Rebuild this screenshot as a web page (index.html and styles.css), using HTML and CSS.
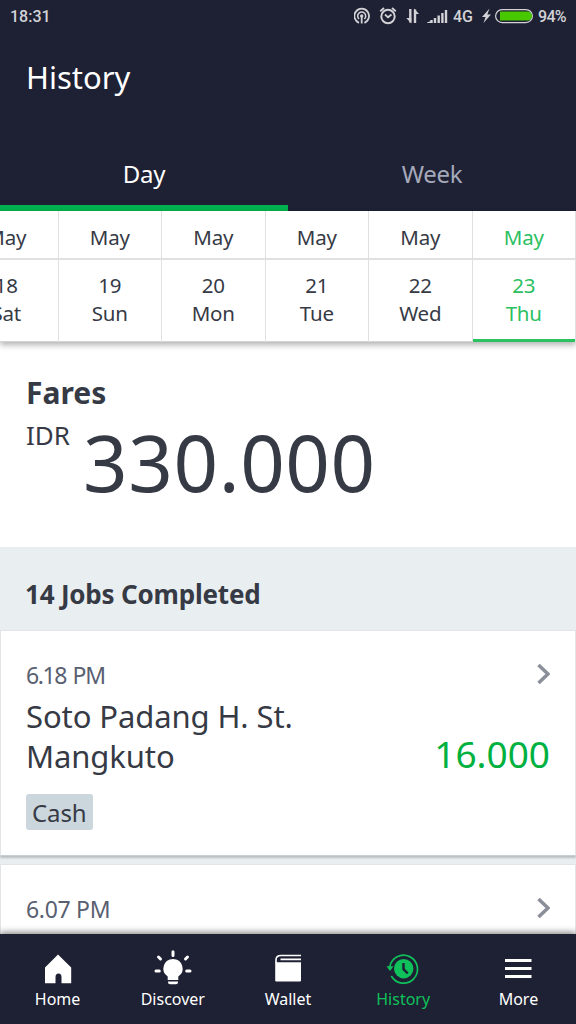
FILE: index.html
```
<!DOCTYPE html>
<html lang="en">
<head>
    <meta charset="UTF-8">
    <title>History</title>
    <link rel="stylesheet" href="styles.css">
</head>
<body>
    <header>
        <div class="status-bar">
            <span class="clock">18:31</span>
            <svg width="99" height="32" viewBox="0 0 99 32" fill="none" stroke="#d2d3d6">
                <!-- hotspot -->
                <path d="M5 22.800A7.300 7.300 0 1 1 10.400 22.800" stroke-width="1.800"/>
                <path d="M5 19A4 4 0 1 1 10.400 19" stroke-width="1.600"/>
                <circle cx="7.700" cy="16" r="1.700" fill="#d2d3d6" stroke="none"/>
                <path d="M7.700 17V23.500" stroke-width="1.800"/>
                <!-- alarm -->
                <circle cx="34" cy="16.500" r="6.700" stroke-width="2"/>
                <path d="M31 14.500l3 2.800 3.500-2.800M26.200 11.200l3.800-3.200M41.800 11.200L38 8" stroke-width="1.800"/>
                <!-- data arrows -->
                <path d="M56.300 9v13.500" stroke-width="2.400"/>
                <path d="M57.300 23.500v-5.500h-5zM60 8.500v5.500h5z" fill="#d2d3d6" stroke="none"/>
                <path d="M61 9.500v13.500" stroke-width="2.400"/>
                <!-- signal -->
                <path d="M77.500 20v3M81 18v5M84.700 15.500V23M88.400 13V23M92 10V23" stroke-width="2.400"/>
                <path d="M73 22.500l4-1.500v2h-4z" fill="#d2d3d6" stroke="none"/>
            </svg>
            <span class="network">4G</span>
            <svg class="battery" width="51" height="32" viewBox="0 0 51 32">
                <path d="M7.500 8.500L0 17h3.600L1.500 23 9 14.500H5.300z" fill="#d2d3d6"/>
                <rect x="13.600" y="9.600" width="36.800" height="13" rx="6.500" fill="none" stroke="#d2d3d6" stroke-width="1.200"/>
                <path d="M18 11.500h27.500a4.500 4.500 0 0 1 0 9H18z" fill="#48c800"/>
            </svg>
            <span class="percent">94%</span>
        </div>
        <h1>History</h1>
        <div class="tabs">
            <div class="tab active">Day</div>
            <div class="tab">Week</div>
        </div>
    </header>

    <div class="dates">
        <div class="date"><div class="month">May</div><div class="day">18<br>Sat</div></div>
        <div class="date"><div class="month">May</div><div class="day">19<br>Sun</div></div>
        <div class="date"><div class="month">May</div><div class="day">20<br>Mon</div></div>
        <div class="date"><div class="month">May</div><div class="day">21<br>Tue</div></div>
        <div class="date"><div class="month">May</div><div class="day">22<br>Wed</div></div>
        <div class="date selected"><div class="month">May</div><div class="day">23<br>Thu</div></div>
    </div>

    <section class="fares">
        <h2>Fares</h2>
        <div class="total">
            <span class="currency">IDR</span>
            <span class="amount">330.000</span>
        </div>
    </section>

    <section class="jobs">
        <h2>14 Jobs Completed</h2>
        <div class="job">
            <div class="job-top">
                <span class="time tight">6.18 PM</span>
                <svg width="13" height="22" viewBox="0 0 13 22"><path d="M1.500 2l9.500 9-9.500 9" fill="none" stroke="#8b8f9a" stroke-width="3.600"/></svg>
            </div>
            <div class="job-main">
                <div class="place">Soto Padang H. St.<br>Mangkuto</div>
                <div class="price">16.000</div>
            </div>
            <span class="tag">Cash</span>
        </div>
        <div class="job">
            <div class="job-top">
                <span class="time">6.07 PM</span>
                <svg width="13" height="22" viewBox="0 0 13 22"><path d="M1.500 2l9.500 9-9.500 9" fill="none" stroke="#8b8f9a" stroke-width="3.600"/></svg>
            </div>
        </div>
    </section>

    <nav>
        <div class="nav-item">
            <svg width="40" height="40" viewBox="0 0 40 40" fill="#fff">
                <path d="M20 5.500L33.200 18.500V34.300H23.500V28a3 3.500 0 0 0-6 0v6.300H7V18.500z"/>
            </svg>
            <span>Home</span>
        </div>
        <div class="nav-item">
            <svg width="40" height="40" viewBox="0 0 40 40" fill="#fff">
                <path d="M20 9.900a9.600 9.600 0 0 0-5.300 17.600V31h10.600v-3.500A9.600 9.600 0 0 0 20 9.900zM15 32.400h10v.8a2 2 0 0 1-2 2h-6a2 2 0 0 1-2-2z"/>
                <path d="M20 2.800v3.600M5.500 8l2 2M34.500 8l-2 2M3 22h3.300M33.700 22H37" stroke="#fff" stroke-width="3" stroke-linecap="round"/>
            </svg>
            <span>Discover</span>
        </div>
        <div class="nav-item">
            <svg width="40" height="40" viewBox="0 0 40 40" fill="#fff">
                <path d="M7.200 13.200H33V31.500a1 1 0 0 1-1 1H8.200a1 1 0 0 1-1-1z"/>
                <path d="M8 14V11q0-4.500 5-4.500h20M12.500 10.400h20.500" fill="none" stroke="#fff" stroke-width="1.600"/>
            </svg>
            <span>Wallet</span>
        </div>
        <div class="nav-item current">
            <svg width="40" height="40" viewBox="0 0 40 40">
                <path d="M6.700 18A14 14 0 1 1 8.300 27" fill="none" stroke="#0fc15a" stroke-width="1.700"/>
                <path d="M3.500 17.300h7L7 22z" fill="#0fc15a"/>
                <circle cx="20.700" cy="19.700" r="9.700" fill="#0fc15a"/>
                <path d="M20.500 14v6.200l4.300 4.300" fill="none" stroke="#1e2033" stroke-width="2.400"/>
            </svg>
            <span>History</span>
        </div>
        <div class="nav-item">
            <svg width="40" height="40" viewBox="0 0 40 40">
                <path d="M7 11.500h26.500M7 19.500h26.500M7 27.500h26.500" stroke="#fff" stroke-width="3"/>
            </svg>
            <span>More</span>
        </div>
    </nav>
</body>
</html>
```
FILE: styles.css
```
* {
    box-sizing: border-box;
}

body {
    display: flex;
    flex-direction: column;
    height: 1024px;
    margin: 0;
    overflow: hidden;
    font-family: "Noto Sans", sans-serif;
    color: #363a45;
    background: #fff;
}

h1, h2 {
    margin: 0;
}

header {
    flex: none;
    height: 211px;
    color: #fff;
    background: #1e2033;
}

.status-bar {
    display: flex;
    height: 32px;
    padding-left: 10px;
    font-family: Roboto, sans-serif;
    font-size: 16px;
    font-weight: 500;
    line-height: 33px;
    color: #d2d3d6;
}

.clock {
    width: 344px;
}

.status-bar svg {
    flex: none;
}

.status-bar .battery {
    margin-right: 5px;
}

.network {
    width: 29px;
}

.percent {
    letter-spacing: -0.7px;
}

h1 {
    padding: 25px 26px 0;
    font-size: 31px;
    font-weight: 400;
    line-height: 40px;
}

.tabs {
    display: flex;
    margin-top: 40px;
}

.tab {
    flex: 1;
    height: 74px;
    padding-top: 20px;
    font-size: 24px;
    line-height: 34px;
    letter-spacing: -0.3px;
    text-align: center;
    color: #a5a9ba;
}

.tab.active {
    color: #fff;
    border-bottom: 6px solid #00b14f;
}

.dates {
    display: flex;
    flex: none;
    justify-content: flex-end;
    height: 131px;
    box-shadow: 0 3px 6px rgba(0, 0, 0, 0.3);
}

.date {
    flex: 0 0 103.5px;
    font-size: 20.5px;
    line-height: 28px;
    letter-spacing: -0.2px;
    text-align: center;
    border-right: 1px solid #e0e0e0;
}

.month {
    height: 49px;
    padding-top: 12px;
    border-bottom: 2px solid #e0e0e0;
}

.day {
    height: 82px;
    padding-top: 11px;
    border-bottom: 1px solid #d5d5d5;
}

.selected {
    color: #2bc062;
}

.selected .day {
    border-bottom: 3px solid #2bc062;
}

.fares {
    flex: none;
    height: 205px;
    padding: 31px 26px 0;
}

.fares h2 {
    font-size: 30px;
    line-height: 40px;
}

.total {
    display: flex;
}

.currency {
    width: 57px;
    padding-top: 4px;
    font-size: 26px;
    line-height: 36px;
}

.amount {
    font-size: 78px;
    line-height: 98px;
    letter-spacing: 0.6px;
}

.jobs {
    flex: 1;
    min-height: 0;
    overflow: hidden;
    background: #e9eef1;
}

.jobs h2 {
    height: 83px;
    padding: 27px 25px 0;
    font-size: 26px;
    line-height: 40px;
    letter-spacing: -0.2px;
}

.job {
    height: 226px;
    margin-bottom: 8px;
    padding: 27px 25px 0;
    background: #fff;
    border: 1px solid #e1e5e7;
    border-bottom-color: #c8ced1;
    box-shadow: 0 2px 2px rgba(0, 0, 0, 0.2);
}

.job-top {
    display: flex;
    justify-content: space-between;
    align-items: center;
    height: 32px;
    font-size: 23px;
    line-height: 36px;
    color: #596071;
}

.time {
    padding-top: 1px;
    letter-spacing: -0.3px;
}

.time.tight {
    letter-spacing: -1.4px;
    word-spacing: 2px;
}

.job-main {
    display: flex;
    justify-content: space-between;
    align-items: flex-end;
    margin-top: 7px;
}

.place {
    font-size: 31px;
    line-height: 39.5px;
    letter-spacing: -0.1px;
}

.price {
    padding-bottom: 1px;
    font-size: 37px;
    line-height: 42px;
    color: #00b140;
}

.tag {
    display: inline-block;
    height: 36px;
    margin-top: 18px;
    padding: 0 6px;
    font-size: 24px;
    line-height: 37px;
    letter-spacing: -0.1px;
    background: #cbd6dd;
    border-radius: 3px;
}

nav {
    display: flex;
    flex: none;
    height: 90px;
    padding-top: 15px;
    color: #fff;
    background: #1e2033;
    box-shadow: 0 -2px 6px rgba(0, 0, 0, 0.45);
    z-index: 1;
}

.nav-item {
    display: flex;
    flex: 1;
    flex-direction: column;
    align-items: center;
    font-size: 16px;
    line-height: 22px;
}

.nav-item span {
    margin-top: -1px;
}

.current {
    color: #0fc15a;
}
```
